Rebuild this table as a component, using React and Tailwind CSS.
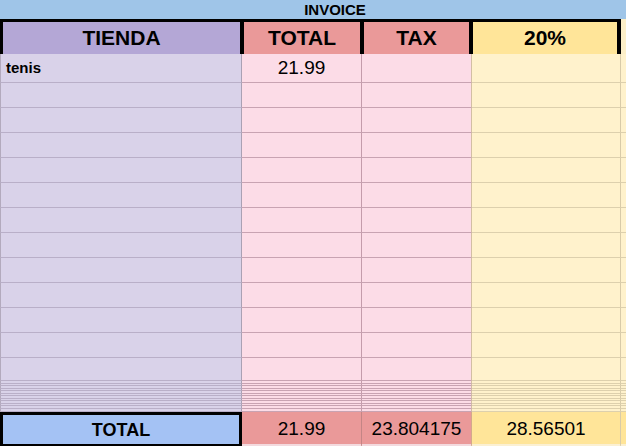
import React from 'react'

const cols = "grid grid-cols-[242px_120px_110px_149px_5px]"

const BodyRow = ({ h, a = "", b = "" }) => (
    <div className={cols}>
        <div className={`${h} bg-[#d9d2e9] border-l border-l-[#b3aabd] border-r border-r-[#aaa1b4] border-b border-b-[#b9afc8] flex items-center pl-[5px] font-bold text-[15px]`}>{a}</div>
        <div className={`${h} bg-[#fcdce7] border-r border-r-[#c49cab] border-b border-b-[#c8a3b2] flex items-center justify-center text-[19px]`}>{b}</div>
        <div className={`${h} bg-[#fcdce7] border-r border-r-[#d3bfa4] border-b border-b-[#c8a3b2]`}></div>
        <div className={`${h} bg-[#fff2cc] border-r border-r-[#d8cba9] border-b border-b-[#ddd0ad]`}></div>
        <div className={`${h} bg-[#fff2cc] border-b border-b-[#ddd0ad]`}></div>
    </div>
)

const App = () => {
    const thin = ["h-[3px]", "h-[2px]", "h-[3px]", "h-[2px]", "h-[3px]", "h-[2px]", "h-[3px]", "h-[2px]", "h-[3px]", "h-[2px]", "h-[3px]", "h-[3px]"]
    return (
        <div className="w-[626px] h-[446px] overflow-hidden bg-white text-black" style={{ fontFamily: '"Liberation Sans", Arial, sans-serif' }}>
            <div className="h-[19px] bg-[#9fc5e8] flex items-center justify-center pl-[44px] font-bold text-[15px] leading-none">INVOICE</div>

            <div className={`${cols} h-[35px]`}>
                <div className="bg-[#b4a7d6] border-y-[3px] border-l-[3px] border-r-2 border-black flex items-center justify-center font-bold text-[21px]">TIENDA</div>
                <div className="bg-[#ea9999] border-y-[3px] border-x-2 border-black flex items-center justify-center font-bold text-[21px]">TOTAL</div>
                <div className="bg-[#ea9999] border-y-[3px] border-l-2 border-r-[3px] border-black flex items-center justify-center font-bold text-[21px]">TAX</div>
                <div className="bg-[#ffe599] border-y-[3px] border-l border-r-4 border-black flex items-center justify-center font-bold text-[21px]">20%</div>
                <div className="bg-[#fcefc8] border-b border-b-[#ddd0ad]"></div>
            </div>

            <BodyRow h="h-[29px]" a="tenis" b="21.99" />
            {Array.from({ length: 11 }).map((_, i) => <BodyRow key={i} h="h-[25px]" />)}
            <BodyRow h="h-[23px]" />
            {thin.map((h, i) => <BodyRow key={"t" + i} h={h} />)}

            <div className={`${cols} h-[34px]`}>
                <div className="bg-[#a4c2f4] border-t-[3px] border-x-[3px] border-b-[6px] border-black flex items-center justify-center font-bold text-[18px] pt-[2px]">TOTAL</div>
                <div className="bg-[#ea9999] border-r border-r-[#c48585] border-b-[6px] border-b-[#f3dade] flex items-center justify-center text-[19px] pt-[2px]">21.99</div>
                <div className="bg-[#ea9999] border-r border-r-[#d3a98c] border-b-[6px] border-b-[#f3dade] flex items-center justify-center text-[19px] pt-[2px]">23.804175</div>
                <div className="bg-[#ffe599] border-r border-r-[#d8cba9] border-b-[6px] border-b-[#fbf0d2] flex items-center justify-center text-[19px] pt-[2px]">28.56501</div>
                <div className="bg-[#ffe599] border-b-[6px] border-b-[#fbf0d2]"></div>
            </div>
        </div>
    )
}

export default App
